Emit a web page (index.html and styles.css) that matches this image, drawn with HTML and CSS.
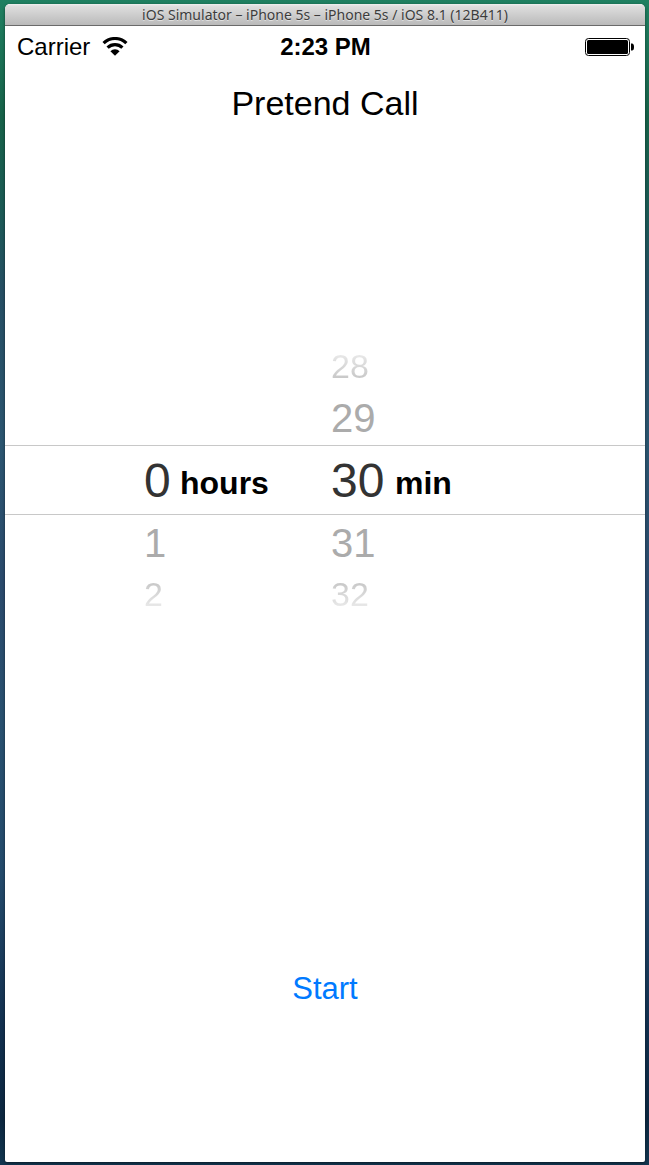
FILE: index.html
```html
<!DOCTYPE html>
<html lang="en">
<head>
<meta charset="utf-8">
<meta name="viewport" content="width=device-width, initial-scale=1">
<title>Pretend Call</title>
<link rel="stylesheet" href="styles.css">
</head>
<body>
<div class="window">
  <header class="titlebar">iOS Simulator – iPhone 5s – iPhone 5s / iOS 8.1 (12B411)</header>
  <div class="status">
    <div class="carrier">
      <span>Carrier</span>
      <svg class="wifi" viewBox="0 0 26 20" aria-label="Wi-Fi">
        <path d="M1.6 6.2a16.2 16.2 0 0 1 22.8 0M5.6 10.6a10.6 10.6 0 0 1 14.8 0" fill="none" stroke="#000" stroke-width="3.2"/>
        <path d="M8.4 14.3a6.4 6.4 0 0 1 9.2 0L13 18.8z"/>
      </svg>
    </div>
    <time class="clock">2:23 PM</time>
    <svg class="battery" viewBox="0 0 50 20" aria-label="Battery full">
      <rect x="1.5" y="1.5" width="44" height="17" rx="3" fill="none" stroke="#000"/>
      <rect x="3" y="3" width="41" height="14" rx="1.5"/>
      <path d="M47 6.5h1a2 3.5 0 0 1 0 7h-1z"/>
    </svg>
  </div>
  <main class="screen">
    <h1 class="heading">Pretend Call</h1>
    <div class="picker" role="group" aria-label="Call delay">
      <div class="row far above"><button class="minutes" type="button">28</button></div>
      <div class="row near"><button class="minutes" type="button">29</button></div>
      <div class="row selected">
        <button class="hours" type="button">0</button><span class="unit">hours</span>
        <button class="minutes" type="button">30</button><span class="unit">min</span>
      </div>
      <div class="row near"><button class="hours" type="button">1</button><button class="minutes" type="button">31</button></div>
      <div class="row far below"><button class="hours" type="button">2</button><button class="minutes" type="button">32</button></div>
    </div>
    <button class="start" type="button">Start</button>
  </main>
</div>
</body>
</html>
```
FILE: styles.css
```css
* { box-sizing: border-box; }

body {
  display: flex;
  min-height: 100vh;
  margin: 0;
  padding: 4px 4px 3px 5px;
  background: linear-gradient(#1f8061, #176249 10%, #1b5a55 18%, #254e63 25%, #2b5570 38%, #2a4a6c 50%, #28506f 62%, #234a6b 75%, #12304f 88%, #0c2740 96%, #123650);
  font-family: "Liberation Sans", Arial, sans-serif;
  color: #000;
}

button {
  padding: 0;
  border: 0;
  background: none;
  font: inherit;
  color: inherit;
  text-align: left;
}

.window {
  display: flex;
  flex: 1;
  flex-direction: column;
  overflow: hidden;
  border-radius: 5px 5px 2px 2px;
  background: #fff;
  box-shadow: 0 1px 3px rgba(0, 0, 0, .5);
}

.titlebar {
  height: 22px;
  border-bottom: 1px solid #6a6a6a;
  background: linear-gradient(#f0f0f0, #dedede 10%, #bababa);
  font: 14px/22px "Noto Sans", sans-serif;
  color: #3c3c3c;
  text-align: center;
  text-shadow: 0 1px 0 rgba(255, 255, 255, .5);
}

.status {
  display: grid;
  grid-template-columns: 1fr auto 1fr;
  align-items: center;
  height: 42px;
  padding: 0 11px 0 12px;
  font-size: 24px;
}

.carrier { display: flex; align-items: center; gap: 12px; }
.wifi { width: 26px; height: 20px; }
.clock { font-weight: bold; }
.battery { width: 50px; height: 20px; justify-self: end; }

.screen {
  display: flex;
  flex: 1;
  flex-direction: column;
  align-items: center;
}

.heading {
  margin: 15px 0 218px;
  font-size: 34px;
  font-weight: normal;
  line-height: 40px;
}

.picker { width: 100%; color: #ababab; }

.row {
  display: grid;
  grid-template-columns: 36px 151px 64px 111px;
  justify-content: center;
  align-items: center;
}

.hours { grid-column: 1; }
.minutes { grid-column: 3; }
.far { height: 50px; font-size: 34px; }
.near { height: 54px; font-size: 40px; }
.above button { color: transparent; background: linear-gradient(#e8e8e8 20%, #c8c8c8 80%); background-clip: text; }
.below button { color: transparent; background: linear-gradient(#c8c8c8 20%, #e8e8e8 80%); background-clip: text; }

.selected {
  height: 70px;
  border: solid #c8c8c8;
  border-width: 1px 0;
  font-size: 48px;
  color: #333;
}

.selected + .near { height: 56px; }
.below { height: 46px; }

.unit {
  padding-top: 6px;
  font-size: 32px;
  font-weight: bold;
  color: #000;
}

.start {
  margin: auto 0 153px;
  font-size: 31px;
  line-height: 40px;
  color: #007aff;
}
```
